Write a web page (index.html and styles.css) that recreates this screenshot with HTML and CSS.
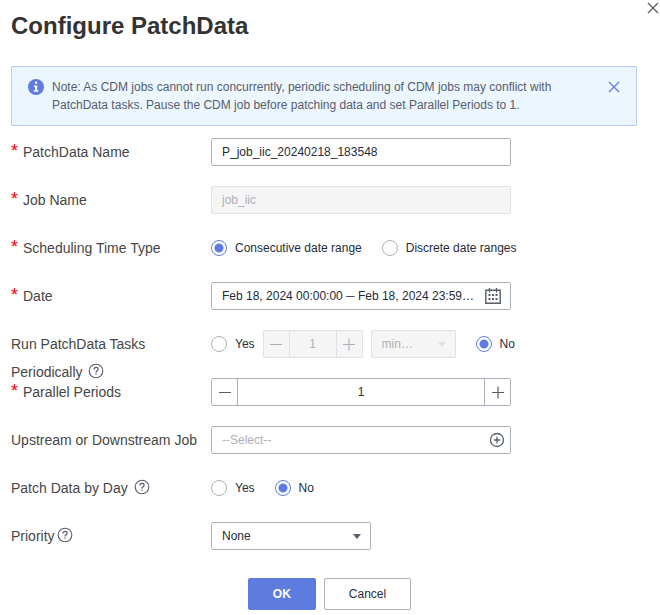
FILE: index.html
```html
<!DOCTYPE html>
<html lang="en">
<head>
<meta charset="utf-8">
<meta name="viewport" content="width=device-width, initial-scale=1">
<title>Configure PatchData</title>
<link rel="stylesheet" href="styles.css">
</head>
<body>
<svg class="defs" aria-hidden="true">
  <symbol id="cross" viewBox="0 0 12 12"><path d="M1 1l10 10M11 1L1 11" fill="none" stroke="currentColor" stroke-width="1.3"/></symbol>
  <symbol id="help" viewBox="0 0 16 16"><circle cx="8" cy="8" r="6.8" fill="none" stroke="currentColor" stroke-width="1.1"/><path d="M6 6.6C6 3.6 10.2 3.7 10.1 6.2C10 7.8 8 7.7 8 9.6" fill="none" stroke="currentColor" stroke-width="1.2"/><path d="M7.4 10.5h1.2v1.3H7.4z" fill="currentColor"/></symbol>
  <symbol id="minus" viewBox="0 0 14 14"><path d="M1 7.5h12" stroke="currentColor" stroke-width="1.2"/></symbol>
  <symbol id="plus" viewBox="0 0 14 14"><path d="M1 7.5h12M7 1.5v12" stroke="currentColor" stroke-width="1.2"/></symbol>
</svg>
<main class="dialog">
  <header class="head">
    <h1 class="title">Configure PatchData</h1>
    <button class="icon-btn close" type="button" aria-label="Close"><svg class="cross"><use href="#cross"/></svg></button>
  </header>

  <section class="note">
    <svg class="info" viewBox="0 0 16 16" aria-hidden="true"><circle cx="8" cy="8" r="8" fill="#5e7ce0"/><path d="M7 2.8h2.2v2H7zM6 6.4h3.2v4.8h1.2v1.6H5.8v-1.6H7V8H6z" fill="#fff"/></svg>
    <p class="note-text">Note: As CDM jobs cannot run concurrently, periodic scheduling of CDM jobs may conflict with PatchData tasks. Pause the CDM job before patching data and set Parallel Periods to 1.</p>
    <button class="icon-btn dismiss" type="button" aria-label="Dismiss note"><svg class="cross"><use href="#cross"/></svg></button>
  </section>

  <form class="form">
    <div class="row">
      <label class="label required" for="name">PatchData Name</label>
      <input class="box field" id="name" type="text" value="P_job_iic_20240218_183548">
    </div>
    <div class="row">
      <label class="label required" for="job">Job Name</label>
      <input class="box field" id="job" type="text" value="job_iic" disabled>
    </div>
    <div class="row" role="radiogroup" aria-labelledby="type">
      <span class="label required" id="type">Scheduling Time Type</span>
      <div class="choices">
        <label class="choice"><input type="radio" name="type" checked>Consecutive date range</label>
        <label class="choice"><input type="radio" name="type">Discrete date ranges</label>
      </div>
    </div>
    <div class="row">
      <label class="label required" for="date">Date</label>
      <div class="box combo">
        <input class="inner" id="date" type="text" value="Feb 18, 2024 00:00:00 ─ Feb 18, 2024 23:59:59">
        <button class="icon-btn" type="button" aria-label="Open calendar"><svg class="help" viewBox="0 0 16 16"><path d="M.8 2.2h14.4v13H.8z" fill="none" stroke="currentColor" stroke-width="1.4"/><path d="M4.5 0v4.5M11.5 0v4.5" stroke="currentColor" stroke-width="1.3"/><path d="M3.5 6h2v2h-2zM7 6h2v2H7zM10.5 6h2v2h-2zM3.5 10h2v2h-2zM7 10h2v2H7zM10.5 10h2v2h-2z" fill="currentColor"/></svg></button>
      </div>
    </div>
    <div class="row" role="radiogroup" aria-labelledby="periodic">
      <span class="label" id="periodic">Run PatchData Tasks Periodically <svg class="help"><use href="#help"/></svg></span>
      <div class="choices periodic">
        <label class="choice"><input type="radio" name="periodic">Yes</label>
        <div class="box stepper small disabled">
          <button type="button" aria-label="Decrease interval" disabled><svg class="sign"><use href="#minus"/></svg></button>
          <input type="text" aria-label="Interval" value="1" disabled>
          <button type="button" aria-label="Increase interval" disabled><svg class="sign"><use href="#plus"/></svg></button>
        </div>
        <div class="pick unit">
          <select class="box" aria-label="Interval unit" disabled><option>minutes</option><option>hours</option></select>
          <svg class="caret" viewBox="0 0 8 5"><path d="M0 0h8L4 5z" fill="currentColor"/></svg>
        </div>
        <label class="choice last"><input type="radio" name="periodic" checked>No</label>
      </div>
    </div>
    <div class="row">
      <label class="label required" for="parallel">Parallel Periods</label>
      <div class="box stepper">
        <button type="button" aria-label="Decrease"><svg class="sign"><use href="#minus"/></svg></button>
        <input id="parallel" type="text" value="1">
        <button type="button" aria-label="Increase"><svg class="sign"><use href="#plus"/></svg></button>
      </div>
    </div>
    <div class="row">
      <label class="label" for="stream">Upstream or Downstream Job</label>
      <div class="box combo add">
        <input class="inner" id="stream" type="text" placeholder="--Select--">
        <button class="icon-btn" type="button" aria-label="Add job"><svg class="help" viewBox="0 0 16 16"><circle cx="8" cy="8" r="6.5" fill="none" stroke="currentColor" stroke-width="1.3"/><path d="M4.8 8h6.4M8 4.8v6.4" stroke="currentColor" stroke-width="1.3"/></svg></button>
      </div>
    </div>
    <div class="row" role="radiogroup" aria-labelledby="byday">
      <span class="label" id="byday">Patch Data by Day <svg class="help"><use href="#help"/></svg></span>
      <div class="choices">
        <label class="choice"><input type="radio" name="byday">Yes</label>
        <label class="choice"><input type="radio" name="byday" checked>No</label>
      </div>
    </div>
    <div class="row">
      <label class="label" for="priority">Priority<svg class="help"><use href="#help"/></svg></label>
      <div class="pick priority">
        <select class="box" id="priority"><option>None</option><option>High</option><option>Low</option></select>
        <svg class="caret" viewBox="0 0 8 5"><path d="M0 0h8L4 5z" fill="currentColor"/></svg>
      </div>
    </div>
  </form>

  <footer class="actions">
    <button class="btn primary" type="button">OK</button>
    <button class="btn" type="button">Cancel</button>
  </footer>
</main>
</body>
</html>
```
FILE: styles.css
```css
* { box-sizing: border-box; }

body {
  margin: 0;
  background: #fff;
  color: #252b3a;
  font: 12px/18px "Liberation Sans", Arial, sans-serif;
}

button, input, select { margin: 0; color: inherit; font: inherit; }

.defs { position: absolute; width: 0; height: 0; }

.dialog { padding: 0 0 5px 11px; }

.head { display: flex; justify-content: space-between; align-items: flex-start; }

.title {
  margin: 10px 0 24px;
  color: #333;
  font-size: 24px;
  line-height: 32px;
}

.icon-btn {
  display: flex;
  flex: none;
  padding: 0;
  border: 0;
  background: none;
  color: #575d6c;
}

.cross { width: 12px; height: 12px; }
.close { margin: 2px 1px 0 0; }
.dismiss { margin: 3px 0 0 auto; color: #5e7ce0; }

.note {
  display: flex;
  align-items: flex-start;
  margin-right: 23px;
  padding: 11px 16px;
  border: 1px solid #bec8fa;
  border-radius: 2px;
  background: #ebf6ff;
  color: #575d6c;
}

.note-text { max-width: 520px; margin: 0 0 0 8px; }
.info { flex: none; width: 16px; height: 16px; margin-top: 1px; }

.form {
  display: grid;
  grid-auto-rows: 28px;
  gap: 20px;
  margin-top: 12px;
}

.row {
  display: grid;
  grid-template-columns: 200px minmax(0, 1fr);
  align-items: start;
}

.label { color: #464646; font-size: 14px; line-height: 28px; }

.required::before {
  content: "*";
  display: inline-block;
  width: 12px;
  color: #f00;
  font-size: 18px;
  line-height: 18px;
}

.help { width: 16px; height: 16px; color: #575d6c; }
.label .help { vertical-align: -2px; margin-left: 2px; }

.box {
  width: 100%;
  max-width: 300px;
  height: 28px;
  border: 1px solid #adb0b8;
  border-radius: 2px;
  background: #fff;
}

.field { padding: 0 10px; }

.box:disabled, .disabled {
  border-color: #dfe1e6;
  background: #f5f5f5;
  color: #adb0b8;
  opacity: 1;
}

.combo { display: flex; align-items: center; padding: 0 9px 0 10px; }
.add { padding-right: 5px; }

.inner {
  flex: 1;
  min-width: 0;
  margin-right: 10px;
  padding: 0;
  border: 0;
  background: none;
  text-overflow: ellipsis;
}

.inner::placeholder { color: #adb0b8; }

.choices { display: flex; align-items: center; gap: 20px; height: 28px; }
.periodic { gap: 8px; }
.choice { display: flex; align-items: center; gap: 8px; white-space: nowrap; }
.last { margin-left: 12px; }

input[type="radio"] {
  appearance: none;
  width: 16px;
  height: 16px;
  border: 1px solid #adb0b8;
  border-radius: 50%;
  background: #fff;
}

input[type="radio"]:checked {
  border-color: #5e7ce0;
  background: radial-gradient(circle, #5e7ce0 4px, #fff 5px);
}

.stepper { display: flex; overflow: hidden; }
.small { width: 100px; }

.stepper button {
  display: flex;
  flex: none;
  align-items: center;
  justify-content: center;
  width: 25px;
  padding: 0;
  border: 0;
  background: none;
  color: #575d6c;
}

.stepper input {
  flex: 1;
  min-width: 0;
  padding: 0;
  border: solid #adb0b8;
  border-width: 0 1px;
  background: none;
  text-align: center;
}

.stepper.disabled input { border-color: #dfe1e6; }
.stepper.disabled button { color: #adb0b8; }
.sign { width: 14px; height: 14px; }

.pick { position: relative; }
.unit { width: 85px; }
.priority { width: 160px; }

.pick select {
  display: block;
  appearance: none;
  padding: 0 38px 0 10px;
  overflow: hidden;
  text-overflow: ellipsis;
  white-space: nowrap;
}

.caret {
  position: absolute;
  top: 12px;
  right: 10px;
  width: 8px;
  height: 5px;
  color: #575d6c;
  pointer-events: none;
}

.unit .caret { color: #dfe1e6; }

.actions {
  display: flex;
  justify-content: center;
  gap: 8px;
  margin: 28px 12px 0 0;
}

.btn {
  height: 32px;
  padding: 0 24px;
  border: 1px solid #adb0b8;
  border-radius: 2px;
  background: #fff;
}

.primary { border-color: #5e7ce0; background: #5e7ce0; color: #fff; font-weight: bold; }
```
